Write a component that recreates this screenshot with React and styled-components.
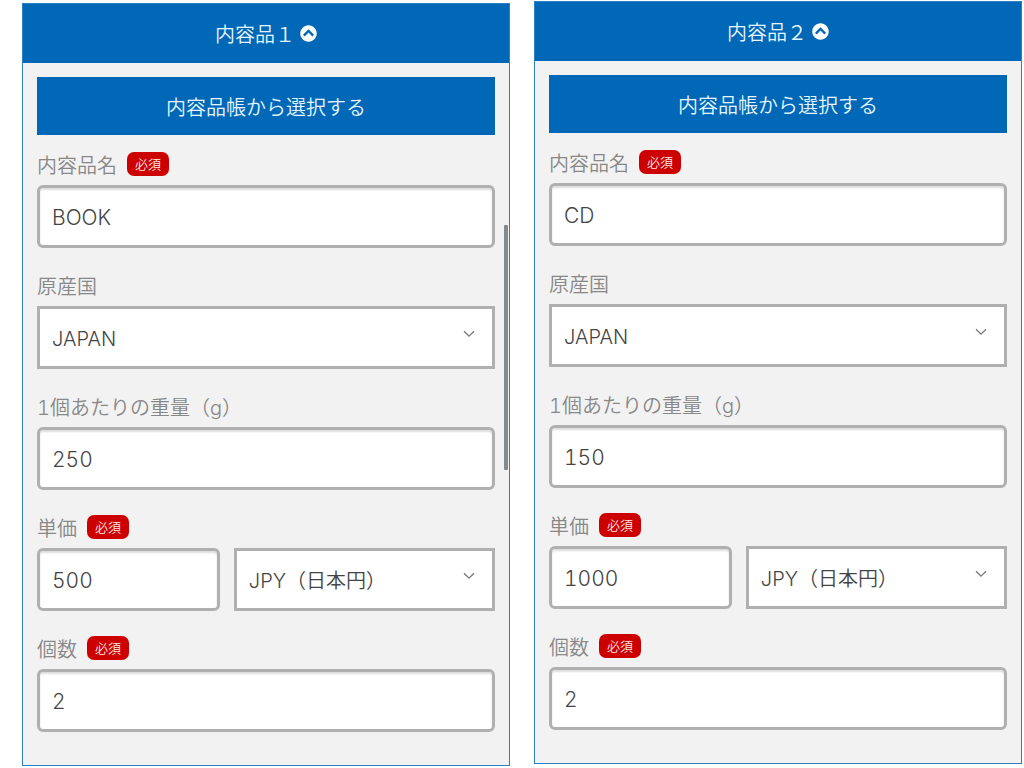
import React, { useState } from "react";
import styled, { createGlobalStyle } from "styled-components";
import { FaChevronCircleUp } from "react-icons/fa";

const GlobalStyle = createGlobalStyle`
  * {
    box-sizing: border-box;
  }

  body {
    margin: 0;
    background: #fff;
    font-family: Inter, "Noto Sans CJK JP", sans-serif;
    font-size: 20px;
    font-weight: 350;
    font-variant-numeric: tabular-nums;
  }

  button,
  input,
  select {
    font: inherit;
    font-variant-numeric: inherit;
  }
`;

const Page = styled.main`
  display: grid;
  grid-template-columns: 1fr 1fr;
  align-items: start;
  gap: 24px;
  padding: 1px 2px 0 22px;
`;

const Panel = styled.section`
  position: relative;
  margin-top: ${(props) => (props.$lowered ? "2px" : "0")};
  border: 1px solid #2f80c1;
  background: #f2f2f2;
`;

const PanelHeader = styled.button`
  display: flex;
  justify-content: center;
  align-items: center;
  gap: 5px;
  width: 100%;
  height: 59px;
  padding: 0;
  border: 0;
  background: #0068b7;
  color: #e6f4ff;
  cursor: pointer;

  svg {
    width: 17px;
    height: 17px;
    color: #fff;
  }
`;

const PanelBody = styled.div`
  padding: 14px 14px 33px;
`;

const SelectButton = styled.button`
  display: block;
  width: 100%;
  height: 58px;
  margin-bottom: 17px;
  padding: 0;
  border: 0;
  background: #0068b7;
  color: #e6f4ff;
  cursor: pointer;
`;

const Fields = styled.div`
  display: grid;
  gap: 25px;
`;

const LabelRow = styled.div`
  display: flex;
  align-items: center;
  gap: 10px;
  height: 24px;
  margin-bottom: 9px;
  color: #888;
`;

const Required = styled.span`
  padding: 0 8px;
  border-radius: 7px;
  background: #c00;
  color: #ffe9e9;
  font-size: 13px;
  line-height: 24px;
`;

const Input = styled.input`
  display: block;
  width: 100%;
  min-width: 0;
  height: 63px;
  padding: 2px 12px 0;
  border: 3px solid #b0b0b0;
  border-radius: 6px;
  background: #fff;
  box-shadow: inset 0 2px 2px #ddd;
  color: #444;
  font-size: 21px;
`;

const SelectWrapper = styled.div`
  position: relative;

  svg {
    position: absolute;
    top: 24px;
    right: 20px;
    pointer-events: none;
  }
`;

const Select = styled.select`
  display: block;
  width: 100%;
  height: 63px;
  padding: 2px 30px 0 12px;
  border: 3px solid #b0b0b0;
  border-radius: 0;
  background: #fff;
  color: #444;
  font-size: 20px;
  appearance: none;
`;

const PriceRow = styled.div`
  display: grid;
  grid-template-columns: 7fr 10fr;
  gap: 14px;
`;

const ScrollThumb = styled.div`
  position: absolute;
  top: 221px;
  right: 1px;
  width: 4px;
  height: 245px;
  border-radius: 1px;
  background: #858a8e;
`;

const Field = ({ id, label, required, children }) => (
  <div>
    <LabelRow>
      <label htmlFor={id}>{label}</label>
      {required && <Required>必須</Required>}
    </LabelRow>
    {children}
  </div>
);

const Dropdown = ({ options, ...rest }) => (
  <SelectWrapper>
    <Select {...rest}>
      {options.map((option) => (
        <option key={option}>{option}</option>
      ))}
    </Select>
    <svg width="12" height="8" viewBox="0 0 12 8" fill="none" stroke="#777">
      <path d="M1 1.2 L6 6.2 L11 1.2" strokeWidth="1.3" />
    </svg>
  </SelectWrapper>
);

const ItemPanel = ({ id, title, item, lowered, scrolling }) => {
  const [open, setOpen] = useState(true);
  const [values, setValues] = useState(item);

  const handleChange = (e) => {
    setValues({ ...values, [e.target.name]: e.target.value });
  };

  return (
    <Panel $lowered={lowered}>
      <PanelHeader
        type="button"
        aria-expanded={open}
        onClick={() => setOpen(!open)}
      >
        {title}
        <FaChevronCircleUp />
      </PanelHeader>
      {open && (
        <PanelBody>
          <SelectButton type="button">内容品帳から選択する</SelectButton>
          <Fields>
            <Field id={`${id}-name`} label="内容品名" required>
              <Input
                id={`${id}-name`}
                name="name"
                value={values.name}
                onChange={handleChange}
              />
            </Field>
            <Field id={`${id}-country`} label="原産国">
              <Dropdown id={`${id}-country`} options={["JAPAN"]} />
            </Field>
            <Field id={`${id}-weight`} label="1個あたりの重量（g）">
              <Input
                id={`${id}-weight`}
                name="weight"
                value={values.weight}
                onChange={handleChange}
              />
            </Field>
            <Field id={`${id}-price`} label="単価" required>
              <PriceRow>
                <Input
                  id={`${id}-price`}
                  name="price"
                  value={values.price}
                  onChange={handleChange}
                />
                <Dropdown aria-label="通貨" options={["JPY（日本円）"]} />
              </PriceRow>
            </Field>
            <Field id={`${id}-count`} label="個数" required>
              <Input
                id={`${id}-count`}
                name="count"
                value={values.count}
                onChange={handleChange}
              />
            </Field>
          </Fields>
        </PanelBody>
      )}
      {scrolling && <ScrollThumb />}
    </Panel>
  );
};

const App = () => (
  <>
    <GlobalStyle />
    <Page>
      <ItemPanel
        id="item1"
        title="内容品１"
        item={{ name: "BOOK", weight: "250", price: "500", count: "2" }}
        lowered
        scrolling
      />
      <ItemPanel
        id="item2"
        title="内容品２"
        item={{ name: "CD", weight: "150", price: "1000", count: "2" }}
      />
    </Page>
  </>
);

export default App;
